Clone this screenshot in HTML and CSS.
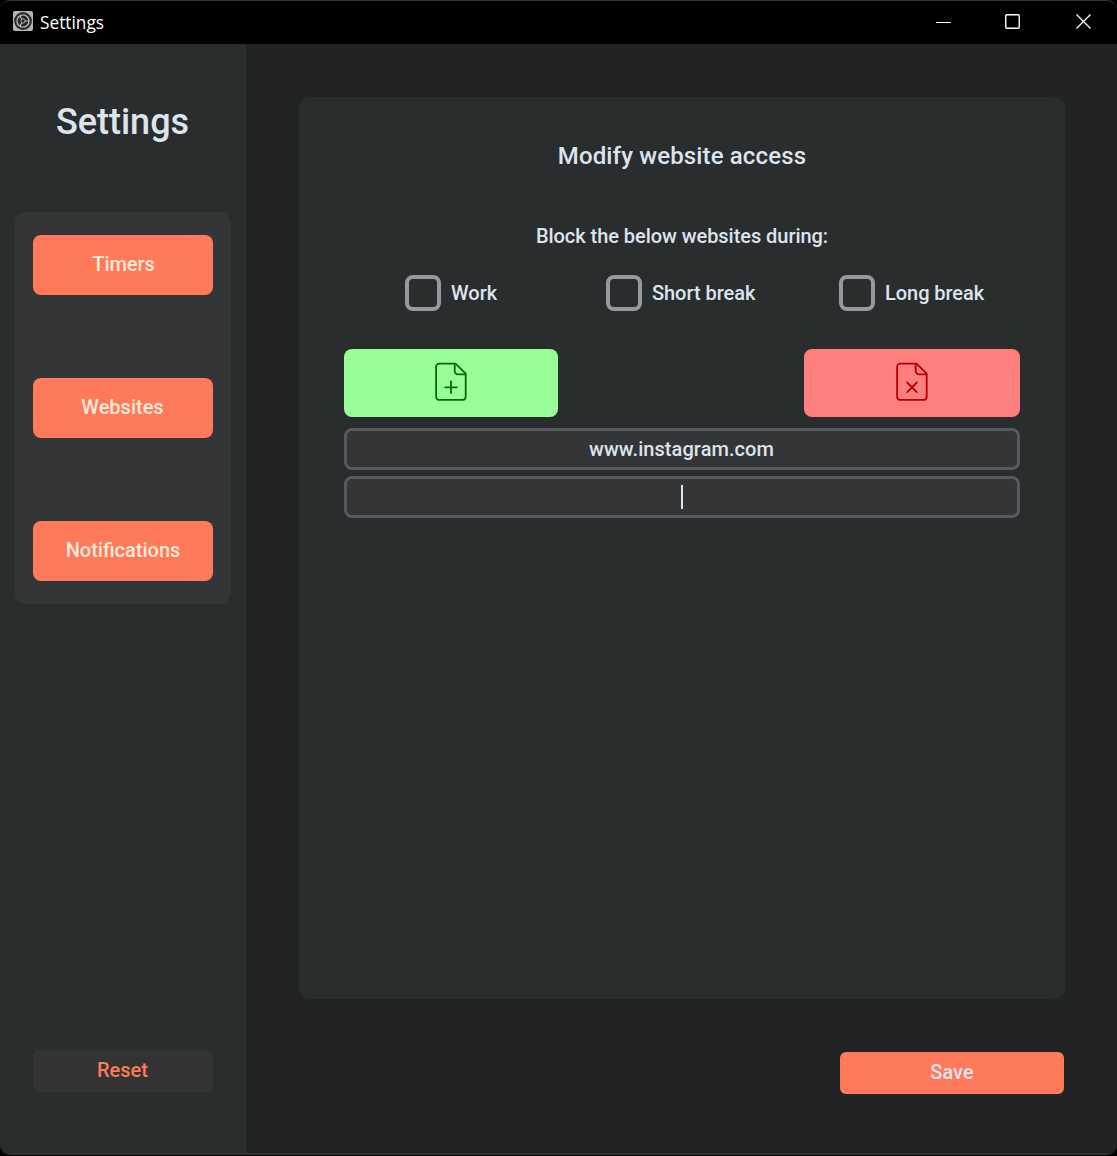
FILE: index.html
```html
<!DOCTYPE html>
<html lang="en">
<head>
<meta charset="utf-8">
<title>Settings</title>
<link rel="stylesheet" href="styles.css">
</head>
<body>
<div class="window">
  <header class="titlebar">
    <svg class="app-icon" width="20" height="20" viewBox="0 0 20 20" fill="none">
      <rect width="20" height="20" rx="2" fill="#b4b4b4"/>
      <circle cx="10" cy="10" r="8.900" fill="#262626"/>
      <circle cx="10" cy="10" r="6" stroke="#c0c0c0" stroke-width="1.200"/>
      <circle cx="10" cy="10" r="6.900" stroke="#808080" stroke-width=".8" stroke-dasharray="1 1.200"/>
      <circle cx="10" cy="10" r="2.100" stroke="#a8a8a8"/>
      <path d="M12 10h4M8.800 8L6.800 5M8.800 12l-2 3" stroke="#c0c0c0" stroke-width="1.200"/>
    </svg>
    <span class="window-title">Settings</span>
    <div class="controls">
      <svg width="16" height="16" viewBox="0 0 16 16"><path d="M0 8.500h15" stroke="#fff"/></svg>
      <svg width="16" height="16" viewBox="0 0 16 16"><rect x=".75" y=".75" width="13.500" height="13.500" rx="1.200" fill="none" stroke="#fff" stroke-width="1.400"/></svg>
      <svg width="16" height="16" viewBox="0 0 16 16"><path d="M.5.5l14 14M14.500.5L.5 14.500" stroke="#fff" stroke-width="1.300"/></svg>
    </div>
  </header>
  <div class="content">
    <aside class="sidebar">
      <h1 class="heading">Settings</h1>
      <nav class="nav">
        <button class="btn nav-btn timers">Timers</button>
        <button class="btn nav-btn websites">Websites</button>
        <button class="btn nav-btn">Notifications</button>
      </nav>
      <button class="btn reset">Reset</button>
    </aside>
    <main class="main">
      <section class="panel">
        <h2 class="panel-title">Modify website access</h2>
        <p class="panel-text">Block the below websites during:</p>
        <div class="checks">
          <label class="check"><span class="box"></span><span>Work</span></label>
          <label class="check"><span class="box"></span><span>Short break</span></label>
          <label class="check"><span class="box"></span><span>Long break</span></label>
        </div>
        <div class="actions">
          <button class="btn add" aria-label="Add website">
            <svg width="34" height="40" viewBox="0 0 34 40" fill="none" stroke="#006d00" stroke-width="1.800" stroke-linecap="round" stroke-linejoin="round">
              <path d="M21.500 1.700H5.200A3.100 3.100 0 0 0 2.100 4.800v30a3.100 3.100 0 0 0 3.100 3.100h23.400a3.100 3.100 0 0 0 3.100-3.100V11.700z"/>
              <path d="M20.700 2v7.200a3.200 3.200 0 0 0 3.200 3.200h7.500M17 19.500v11.600M11.200 25.300h11.600"/>
            </svg>
          </button>
          <button class="btn remove" aria-label="Remove website">
            <svg width="34" height="40" viewBox="0 0 34 40" fill="none" stroke="#b80000" stroke-width="1.800" stroke-linecap="round" stroke-linejoin="round">
              <path d="M21.500 1.700H5.200A3.100 3.100 0 0 0 2.100 4.800v30a3.100 3.100 0 0 0 3.100 3.100h23.400a3.100 3.100 0 0 0 3.100-3.100V11.700z"/>
              <path d="M20.700 2v7.200a3.200 3.200 0 0 0 3.200 3.200h7.500M12.200 20.500l9.600 9.600M21.800 20.500l-9.600 9.600"/>
            </svg>
          </button>
        </div>
        <div class="entries">
          <div class="entry"><span class="url">www.instagram.com</span></div>
          <div class="entry"><span class="caret"></span></div>
        </div>
      </section>
      <button class="btn save">Save</button>
    </main>
  </div>
</div>
</body>
</html>
```
FILE: styles.css
```css
* { box-sizing: border-box; }
html { background: #000; }
body {
  margin: 0;
  font: 500 20px/24px Roboto, sans-serif;
  color: #dce4ee;
}
.window {
  display: flex;
  flex-direction: column;
  height: 1155px;
  overflow: hidden;
  border-top: 1px solid #333;
  border-bottom: 2px solid #303132;
  border-radius: 10px;
  background: #000;
}
.titlebar {
  display: flex;
  flex: 0 0 43px;
  align-items: center;
  padding: 0 25px 2px 13px;
}
.app-icon { margin-top: -1px; }
.window-title {
  margin: 2px 0 0 7px;
  font: 400 17.300px/24px "Open Sans", sans-serif;
  color: #fff;
}
.controls { display: flex; margin-left: auto; }
.controls svg { display: block; margin-left: 55px; }
.controls svg:nth-child(2) { margin-left: 53px; }
.content { display: flex; flex: 1; min-height: 0; }
.sidebar {
  display: flex;
  flex: 0 0 246px;
  flex-direction: column;
  align-items: center;
  padding: 54px 15px 61px;
  background: #2a2d2e;
}
.heading { margin: 0 1px 0 0; font-size: 36px; font-weight: 500; line-height: 48px; }
.nav {
  display: flex;
  flex-direction: column;
  gap: 83px;
  width: 216px;
  margin-top: 66px;
  padding: 23px 18px;
  border-radius: 11px;
  background: #343536;
}
.btn {
  display: flex;
  align-items: center;
  justify-content: center;
  padding: 0 0 2px;
  border: 0;
  border-radius: 8px;
  font: inherit;
  color: inherit;
}
.nav-btn { height: 60px; background: #ff795b; color: #faebd7; }
.timers { padding-left: 1px; letter-spacing: -.05px; }
.websites { padding-right: 1px; }
.reset {
  width: 180px;
  height: 42px;
  margin-top: auto;
  padding-right: 1px;
  border-radius: 6px;
  background: #333;
  color: #ff795b;
}
.main {
  display: flex;
  flex: 1;
  flex-direction: column;
  padding: 53px 52px 59px 53px;
  background: #222325;
}
.panel {
  flex: 0 0 902px;
  padding: 44px 45px 0;
  border-radius: 11px;
  background: #2a2d2e;
}
.panel-title {
  margin: 0;
  font-size: 24px;
  font-weight: 500;
  line-height: 30px;
  letter-spacing: .14px;
  text-align: center;
}
.panel-text { margin: 53px 0 27px; letter-spacing: -.05px; text-align: center; }
.checks { display: flex; margin-left: 61px; letter-spacing: -.05px; }
.check { display: flex; align-items: center; gap: 10px; }
.check:nth-child(1) { width: 201px; letter-spacing: 0; }
.check:nth-child(2) { width: 233px; }
.box { width: 36px; height: 36px; border: 4px solid #949a9f; border-radius: 8px; }
.actions { display: flex; justify-content: space-between; margin: 38px 0 11px; }
.add, .remove { width: 216px; height: 68px; }
.add { width: 214px; background: #98ff98; }
.remove { background: #ff7f7f; }
.entries { display: flex; flex-direction: column; gap: 6px; }
.entry {
  display: flex;
  align-items: center;
  justify-content: center;
  height: 42px;
  border: 3px solid #565b5e;
  border-radius: 8px;
  background: #343536;
}
.url { letter-spacing: .07px; margin-right: 1px; }
.caret { width: 2px; height: 24px; background: #dce4ee; }
.save {
  align-self: flex-end;
  width: 224px;
  height: 42px;
  margin: 53px 1px 0 0;
  border-radius: 6px;
  background: #ff795b;
}
```
